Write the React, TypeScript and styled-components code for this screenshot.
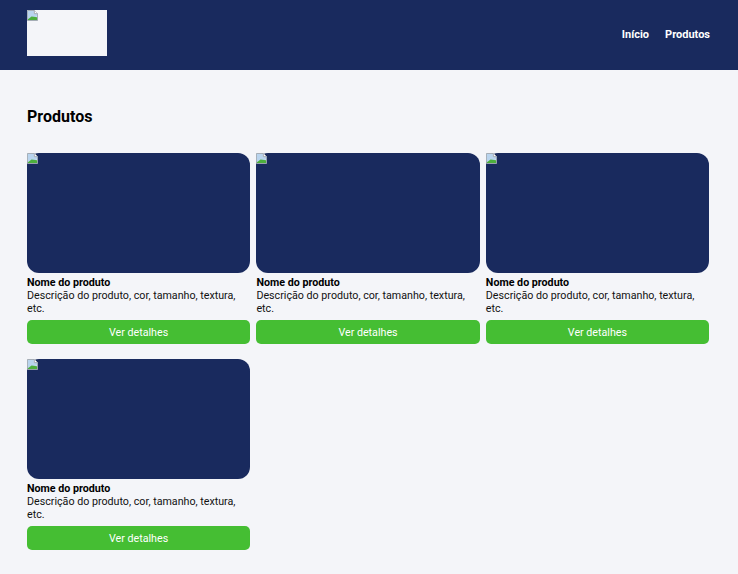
import React from "react";
import styled, { createGlobalStyle } from "styled-components";

const Global = createGlobalStyle`
  html, body { margin: 0; padding: 0; background: #f4f5f9; }
  body { font-family: Roboto, "Liberation Sans", Arial, sans-serif; color: #111; }
  * { box-sizing: border-box; }
`;

const Header = styled.header`
  height: 70px;
  background: #192a5e;
  display: flex;
  justify-content: space-between;
  align-items: flex-start;
  padding: 10px 28px 0 27px;
`;

const LogoBox = styled.div`
  position: relative;
  width: 80px;
  height: 46px;
  background: #f4f5f9;
`;

const Nav = styled.nav`
  display: flex;
  gap: 16px;
  height: 48px;
  align-items: center;
`;

const NavLink = styled.a`
  color: #fff;
  font-weight: 700;
  font-size: 11px;
  text-decoration: none;
`;

const Main = styled.main`
  padding: 37px 29px 20px 27px;
`;

const Title = styled.h1`
  margin: 0 0 26px;
  font-size: 16px;
  font-weight: 700;
  color: #000;
  line-height: 20px;
`;

const Grid = styled.div`
  display: grid;
  grid-template-columns: repeat(3, 1fr);
  column-gap: 6.3px;
  row-gap: 15px;
`;

const Card = styled.div`
  display: flex;
  flex-direction: column;
`;

const ImageBox = styled.div`
  position: relative;
  height: 120px;
  background: #192a5e;
  border-radius: 12px;
`;

const BrokenIcon = styled.svg`
  position: absolute;
  top: 0;
  left: 0;
  width: 11px;
  height: 11px;
`;

const Name = styled.div`
  margin-top: 3px;
  font-weight: 700;
  font-size: 10.7px;
  line-height: 13px;
  color: #000;
`;

const Desc = styled.div`
  font-size: 10.7px;
  line-height: 13px;
  color: #111;
`;

const Button = styled.button`
  margin-top: 5px;
  height: 24px;
  border: none;
  border-radius: 5px;
  background: #45be33;
  color: #fff;
  font-family: Roboto, "Liberation Sans", Arial, sans-serif;
  font-size: 10.7px;
  cursor: pointer;
`;

const Broken = () => (
  <BrokenIcon viewBox="0 0 12 12">
    <path d="M0.5 0.5 H8 L11.5 4 V11.5 H0.5 Z" fill="#eef2f6" stroke="#9aa3ad" strokeWidth="1" />
    <path d="M1 1 H7.5 V4 H11 V7 L1 10 Z" fill="#b9d4ee" />
    <path d="M1 10 L5 7 L11 8 V11 H1 Z" fill="#4caf3c" />
    <path d="M8 0.5 V4 H11.5" fill="#fff" stroke="#9aa3ad" strokeWidth="1" />
  </BrokenIcon>
);

const ProductCard = () => (
  <Card>
    <ImageBox>
      <Broken />
    </ImageBox>
    <Name>Nome do produto</Name>
    <Desc>Descrição do produto, cor, tamanho, textura, etc.</Desc>
    <Button>Ver detalhes</Button>
  </Card>
);

export default function App() {
  return (
    <>
      <Global />
      <Header>
        <LogoBox>
          <Broken />
        </LogoBox>
        <Nav>
          <NavLink href="#">Início</NavLink>
          <NavLink href="#">Produtos</NavLink>
        </Nav>
      </Header>
      <Main>
        <Title>Produtos</Title>
        <Grid>
          {[0, 1, 2, 3].map((i) => (
            <ProductCard key={i} />
          ))}
        </Grid>
      </Main>
    </>
  );
}
